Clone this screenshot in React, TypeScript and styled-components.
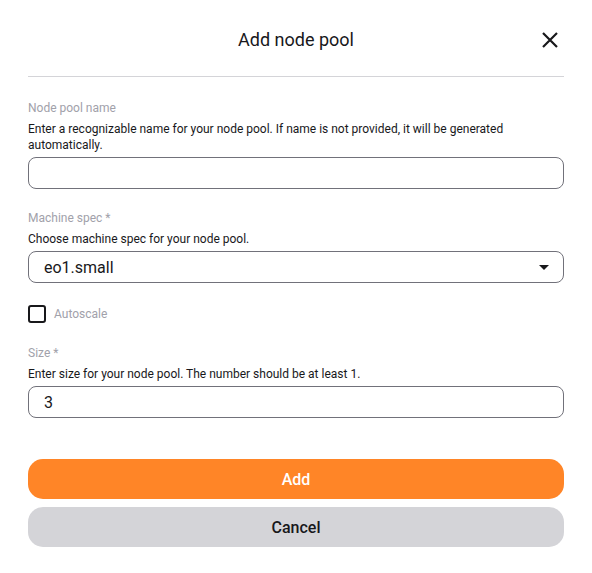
import styled, { createGlobalStyle } from "styled-components"

const GlobalStyle = createGlobalStyle`
  html, body {
    margin: 0;
    padding: 0;
    background: #ffffff;
  }
  body {
    font-family: Roboto, "Liberation Sans", sans-serif;
    color: #18181b;
  }
  * {
    box-sizing: border-box;
  }
`

const App = () => {
  return (
    <>
      <GlobalStyle />
      <Dialog>
        <Header>
          <Title>Add node pool</Title>
          <CloseButton aria-label="Close">
            <svg width="16" height="16" viewBox="0 0 16 16" fill="none">
              <path d="M1 1L15 15M15 1L1 15" stroke="#18181b" strokeWidth="2.2" />
            </svg>
          </CloseButton>
        </Header>
        <Divider />

        <Form>
          <Field>
            <Label>Node pool name</Label>
            <Hint>
              Enter a recognizable name for your node pool. If name is not provided, it will be
              generated automatically.
            </Hint>
            <TextInput type="text" />
          </Field>

          <Field>
            <Label>Machine spec *</Label>
            <Hint>Choose machine spec for your node pool.</Hint>
            <Select>
              <span>eo1.small</span>
              <svg width="10" height="5" viewBox="0 0 10 5">
                <path d="M0 0L10 0L5 5Z" fill="#18181b" />
              </svg>
            </Select>
          </Field>

          <CheckRow>
            <CheckBox />
            <CheckLabel>Autoscale</CheckLabel>
          </CheckRow>

          <Field>
            <Label>Size *</Label>
            <Hint>Enter size for your node pool. The number should be at least 1.</Hint>
            <TextInput type="text" defaultValue="3" />
          </Field>
        </Form>

        <Actions>
          <Button $variant="primary">Add</Button>
          <Button $variant="secondary">Cancel</Button>
        </Actions>
      </Dialog>
    </>
  )
}

export default App

const Dialog = styled.div`
  width: 592px;
  padding: 0 28px;
`

const Header = styled.div`
  position: relative;
  display: flex;
  justify-content: center;
  align-items: center;
  padding: 28px 0 24px;
  height: 76px;
`

const Title = styled.h2`
  margin: 0;
  font-size: 18px;
  line-height: 24px;
  font-weight: 400;
  color: #18181b;
`

const CloseButton = styled.button`
  position: absolute;
  right: 6px;
  top: 32px;
  width: 16px;
  height: 16px;
  padding: 0;
  border: none;
  background: none;
  display: flex;
  cursor: pointer;
`

const Divider = styled.div`
  height: 1px;
  background: #d4d4d8;
`

const Form = styled.div`
  display: flex;
  flex-direction: column;
  gap: 21px;
  padding-top: 23px;
`

const Field = styled.div`
  display: flex;
  flex-direction: column;
`

const Label = styled.div`
  font-size: 12px;
  line-height: 16px;
  color: #a1a1aa;
  margin-bottom: 5px;
`

const Hint = styled.div`
  font-size: 12px;
  line-height: 16px;
  color: #18181b;
  margin-bottom: 4px;
`

const TextInput = styled.input`
  height: 32px;
  width: 100%;
  border: 1px solid #71717a;
  border-radius: 8px;
  padding: 0 15px;
  font-family: Roboto, "Liberation Sans", sans-serif;
  font-size: 16px;
  color: #18181b;
  outline: none;
`

const Select = styled.div`
  height: 32px;
  border: 1px solid #71717a;
  border-radius: 8px;
  padding: 0 14px 0 15px;
  display: flex;
  align-items: center;
  justify-content: space-between;
  font-size: 16px;
  color: #18181b;
`

const CheckRow = styled.label`
  display: flex;
  align-items: center;
  gap: 8px;
  margin: 1px 0 1px;
`

const CheckBox = styled.span`
  width: 18px;
  height: 18px;
  border: 2px solid #18181b;
  border-radius: 3px;
`

const CheckLabel = styled.span`
  font-size: 12px;
  color: #a1a1aa;
`

const Actions = styled.div`
  display: flex;
  flex-direction: column;
  gap: 8px;
  padding-top: 41px;
`

const Button = styled.button<{ $variant: "primary" | "secondary" }>`
  height: 40px;
  width: 100%;
  border: none;
  border-radius: 15px;
  font-family: Roboto, "Liberation Sans", sans-serif;
  font-size: 16px;
  font-weight: 500;
  cursor: pointer;
  background: ${({ $variant }) => ($variant === "primary" ? "#ff8527" : "#d4d4d8")};
  color: ${({ $variant }) => ($variant === "primary" ? "#ffffff" : "#18181b")};
`
